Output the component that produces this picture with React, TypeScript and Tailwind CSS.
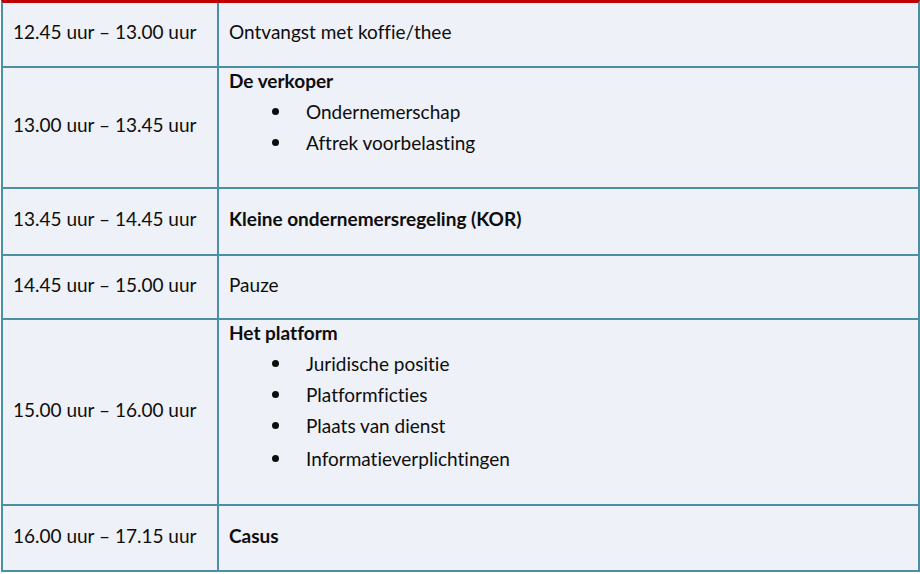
type Row = {
  time: string;
  height: string;
  title: string;
  bold?: boolean;
  items?: string[];
};

const rows: Row[] = [
  { time: "12.45 uur – 13.00 uur", height: "h-[65px]", title: "Ontvangst met koffie/thee" },
  {
    time: "13.00 uur – 13.45 uur",
    height: "h-[121px]",
    title: "De verkoper",
    bold: true,
    items: ["Ondernemerschap", "Aftrek voorbelasting"],
  },
  { time: "13.45 uur – 14.45 uur", height: "h-[67px]", title: "Kleine ondernemersregeling (KOR)", bold: true },
  { time: "14.45 uur – 15.00 uur", height: "h-[64px]", title: "Pauze" },
  {
    time: "15.00 uur – 16.00 uur",
    height: "h-[186px]",
    title: "Het platform",
    bold: true,
    items: ["Juridische positie", "Platformficties", "Plaats van dienst", "Informatieverplichtingen"],
  },
  { time: "16.00 uur – 17.15 uur", height: "h-[66px]", title: "Casus", bold: true },
];

function App() {
  return (
    <div className="h-[574px] w-[920px] bg-white font-['Lato',sans-serif] text-[19px] text-[#0d0d0d] [font-variant-ligatures:none]">
      <div className="ml-[1px] w-[919px] border-t-[3px] border-t-[#c00000] border-x-2 border-x-[#4a8fa3] bg-[#eef1f7]">
        {rows.map((row) => (
          <div key={row.time} className={`flex border-b-2 border-[#4a8fa3] ${row.height}`}>
            <div className="flex w-[216px] shrink-0 items-center border-r-2 border-[#4a8fa3] pb-[4px] pl-[10px]">
              {row.time}
            </div>
            {row.items ? (
              <div className="flex-1 pl-[10px] pt-[1px]">
                <p className="font-bold leading-[24px]">{row.title}</p>
                <ul className="mt-[3px]">
                  {row.items.map((item, i) => (
                    <li
                      key={item}
                      className={`flex items-center leading-[31px] ${i === 3 ? "mt-[2px]" : ""}`}
                    >
                      <span className="ml-[43px] h-[7px] w-[7px] rounded-full bg-[#0d0d0d]" />
                      <span className="ml-[27px]">{item}</span>
                    </li>
                  ))}
                </ul>
              </div>
            ) : (
              <div className={`flex flex-1 items-center pb-[4px] pl-[10px] ${row.bold ? "font-bold" : ""}`}>
                {row.title}
              </div>
            )}
          </div>
        ))}
      </div>
    </div>
  );
}

export default App;
